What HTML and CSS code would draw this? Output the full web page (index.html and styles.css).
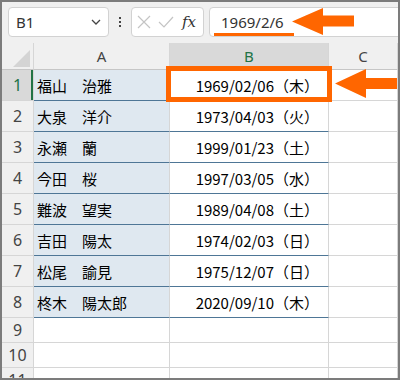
FILE: index.html
```html
<!DOCTYPE html>
<html lang="ja">
<head>
<meta charset="utf-8">
<link rel="stylesheet" href="styles.css">
</head>
<body>
<div class="frame">
  <div class="toolbar">
    <div class="namebox">
      <span class="nametext">B1</span>
      <svg class="chev" width="10" height="6" viewBox="0 0 10 6"><path d="M1 1 L5 5 L9 1" fill="none" stroke="#444" stroke-width="1.3"/></svg>
    </div>
    <div class="dots"><i></i><i></i><i></i></div>
    <div class="fbtns">
      <svg width="16" height="16" viewBox="0 0 16 16"><path d="M2 2 L14 14 M14 2 L2 14" stroke="#c4c4c4" stroke-width="1.2" fill="none"/></svg>
      <svg width="16" height="16" viewBox="0 0 16 16"><path d="M1 8 L6 13 L15 3" stroke="#c4c4c4" stroke-width="1.2" fill="none"/></svg>
      <span class="fx">fx</span>
    </div>
    <div class="formula"><span>1969/2/6</span></div>
  </div>
  <div class="sheet">
    <div class="corner"><span class="tri"></span></div>
    <div class="colhead">A</div>
    <div class="colhead sel">B</div>
    <div class="colhead">C</div>

    <div class="rowhead sel">1</div><div class="cell name">福山　治雅</div><div class="cell date">1969/02/06（木）</div><div class="cell"></div>
    <div class="rowhead">2</div><div class="cell name">大泉　洋介</div><div class="cell date">1973/04/03（火）</div><div class="cell"></div>
    <div class="rowhead">3</div><div class="cell name">永瀬　蘭</div><div class="cell date">1999/01/23（土）</div><div class="cell"></div>
    <div class="rowhead">4</div><div class="cell name">今田　桜</div><div class="cell date">1997/03/05（水）</div><div class="cell"></div>
    <div class="rowhead">5</div><div class="cell name">難波　望実</div><div class="cell date">1989/04/08（土）</div><div class="cell"></div>
    <div class="rowhead">6</div><div class="cell name">吉田　陽太</div><div class="cell date">1974/02/03（日）</div><div class="cell"></div>
    <div class="rowhead">7</div><div class="cell name">松尾　諭見</div><div class="cell date">1975/12/07（日）</div><div class="cell"></div>
    <div class="rowhead">8</div><div class="cell name">柊木　陽太郎</div><div class="cell date">2020/09/10（木）</div><div class="cell"></div>
    <div class="rowhead">9</div><div class="cell"></div><div class="cell"></div><div class="cell"></div>
    <div class="rowhead">10</div><div class="cell"></div><div class="cell"></div><div class="cell"></div>
    <div class="rowhead">11</div><div class="cell"></div><div class="cell"></div><div class="cell"></div>
  </div>

  <div class="underline"></div>
  <svg class="arrow arrow-top" width="62" height="27" viewBox="0 0 62 27"><polygon points="0,13.5 31,0 31,7.5 62,7.5 62,18.5 31,18.5 31,27" fill="#ff6600"/></svg>
  <svg class="arrow arrow-row" width="62" height="29" viewBox="0 0 62 29"><polygon points="0,14.5 31,0 31,9 62,9 62,20 31,20 31,29" fill="#ff6600"/></svg>
  <div class="selbox"></div>
</div>
</body>
</html>
```

FILE: styles.css
```css
html, body {
  margin: 0;
  padding: 0;
  background: #fff;
}

.frame {
  position: relative;
  width: 400px;
  height: 380px;
  box-sizing: border-box;
  border: 2px solid #7c7c7c;
  overflow: hidden;
  background: #fff;
  font-family: "Noto Sans", "Noto Sans CJK JP", sans-serif;
}

.toolbar {
  height: 41px;
  background: #f0f0f0;
  display: flex;
  align-items: flex-start;
  padding-top: 5px;
  box-sizing: border-box;
}

.namebox {
  margin-left: 6px;
  width: 101px;
  height: 30px;
  box-sizing: border-box;
  background: #fff;
  border: 1px solid #d2d2d2;
  border-radius: 4px;
  display: flex;
  align-items: center;
  justify-content: space-between;
  padding: 0 7px 0 7px;
}

.nametext {
  font-size: 15px;
  color: #333;
}

.dots {
  width: 22px;
  height: 30px;
  display: flex;
  flex-direction: column;
  align-items: center;
  justify-content: center;
  gap: 2px;
}

.dots i {
  display: block;
  width: 2px;
  height: 2px;
  background: #444;
}

.fbtns {
  width: 73px;
  height: 30px;
  box-sizing: border-box;
  background: #fff;
  border: 1px solid #d2d2d2;
  border-radius: 4px;
  display: flex;
  align-items: center;
  gap: 6px;
  padding-left: 4px;
}

.fx {
  font-family: "DejaVu Serif", "Liberation Serif", serif;
  font-style: italic;
  font-size: 15px;
  color: #333;
  margin-left: 2px;
}

.formula {
  flex: 1;
  margin-left: 5px;
  margin-right: -8px;
  height: 30px;
  box-sizing: border-box;
  background: #fff;
  border: 1px solid #d2d2d2;
  border-radius: 4px;
  display: flex;
  align-items: center;
  padding-left: 11px;
  font-size: 15px;
  color: #333;
}

.sheet {
  display: grid;
  grid-template-columns: 32px 136px 159px 1fr;
  grid-template-rows: 27px repeat(8, 31px) 25px 25px 25px;
  font-size: 15px;
}

.sheet > div {
  box-sizing: border-box;
  border-right: 1px solid #d6d6d6;
  border-bottom: 1px solid #d6d6d6;
}

.corner {
  background: #f0f0f0;
  position: relative;
  border-bottom-color: #c6c6c6 !important;
}

.tri {
  position: absolute;
  right: 3px;
  bottom: 2px;
  width: 0;
  height: 0;
  border-left: 17px solid transparent;
  border-bottom: 17px solid #d4d4d4;
}

.colhead {
  background: #f0f0f0;
  color: #444;
  display: flex;
  align-items: center;
  justify-content: center;
  border-bottom-color: #c6c6c6 !important;
}

.colhead.sel {
  background: #d9d9d9;
  color: #217346;
}

.rowhead {
  background: #f0f0f0;
  color: #444;
  font-size: 16px;
  display: flex;
  align-items: center;
  justify-content: center;
}

.rowhead.sel {
  background: #d9d9d9;
  color: #217346;
  box-shadow: inset -2px 0 0 #217346;
}

.cell {
  display: flex;
  align-items: center;
  color: #000;
  font-family: "Noto Sans CJK JP", "Noto Sans", sans-serif;
}

.name {
  background: #dfe8f0;
  padding-left: 3px;
  border-bottom-color: #4e7696 !important;
}

.date {
  justify-content: flex-end;
  padding-right: 9px;
  border-bottom-color: #4e7696 !important;
}

.underline {
  position: absolute;
  left: 212px;
  top: 31px;
  width: 80px;
  height: 3px;
  background: #ff6600;
}

.arrow {
  position: absolute;
}

.arrow-top {
  left: 290px;
  top: 6px;
}

.arrow-row {
  left: 333px;
  top: 67px;
}

.selbox {
  position: absolute;
  left: 164px;
  top: 64px;
  width: 166px;
  height: 36px;
  box-sizing: border-box;
  border: 5px solid #ff6600;
}
```
